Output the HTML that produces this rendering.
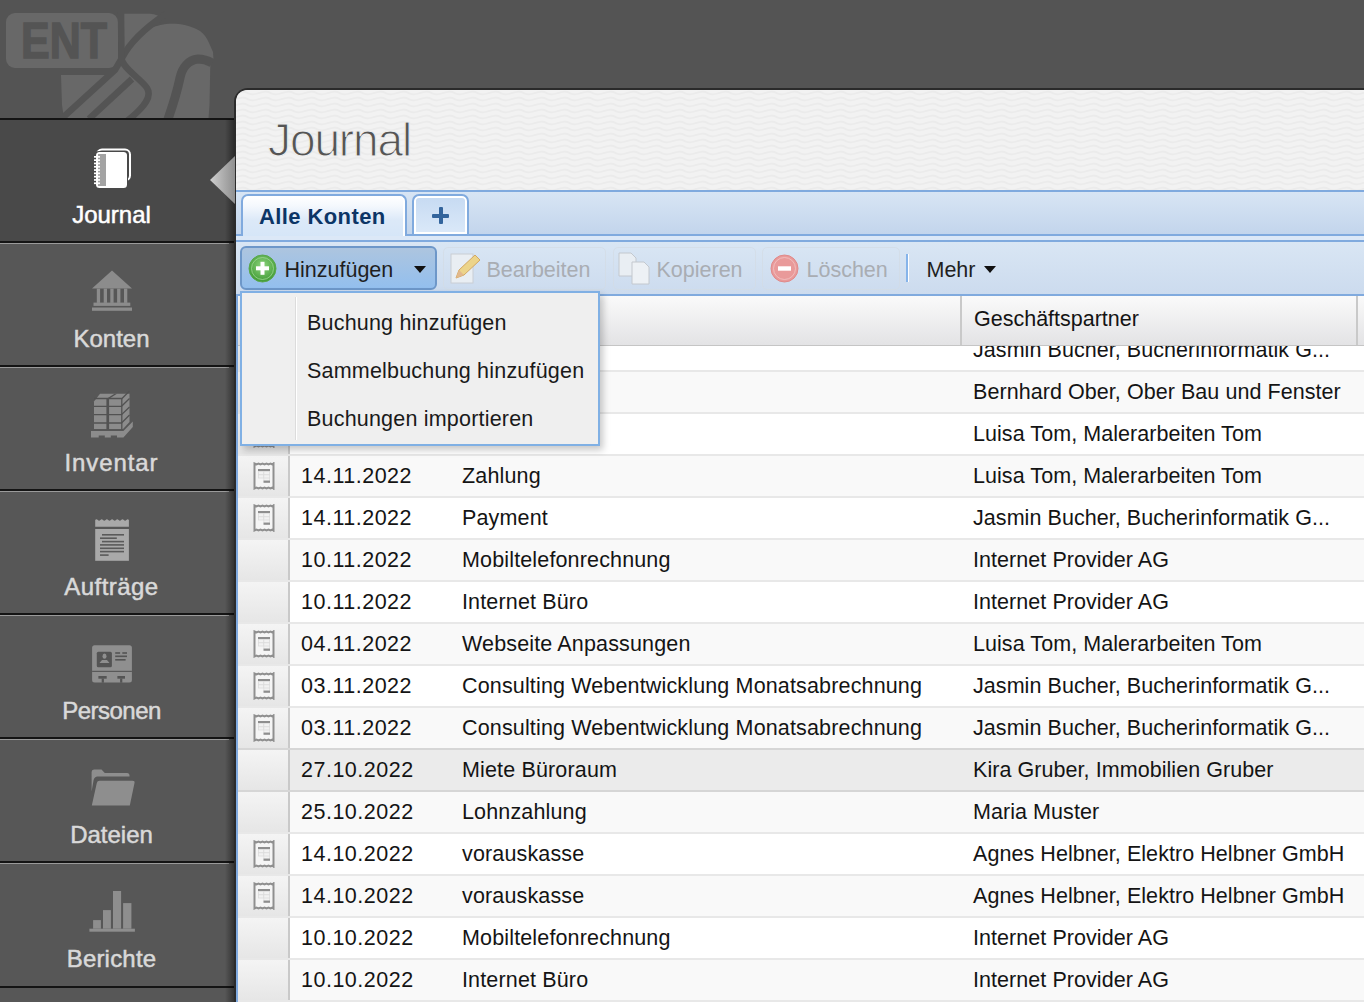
<!DOCTYPE html>
<html><head><meta charset="utf-8">
<style>
*{margin:0;padding:0;box-sizing:border-box}
html,body{width:1364px;height:1002px;overflow:hidden}
body{background:#545454;font-family:"Liberation Sans",sans-serif;position:relative}
.a{position:absolute}
.sb-line-d{position:absolute;left:0;width:234px;height:1.5px;background:#141414}
.sb-line-l{position:absolute;left:0;width:229px;height:1px;background:#9a9a9a}
.sb-lab{position:absolute;left:0;width:223px;text-align:center;font-size:24px;color:#d9d9d9;line-height:28px;margin-top:2px;-webkit-text-stroke:0.5px #d9d9d9;white-space:nowrap}
.sb-ico{position:absolute}
#panel{position:absolute;left:234px;top:88px;width:1140px;height:930px;background:#efefef;border-top-left-radius:14px;border-top:2px solid #2b2b2b;border-left:2px solid #2b2b2b}
.title{position:absolute;left:268px;top:111.5px;font-size:46px;letter-spacing:-1.1px;color:#555;-webkit-text-stroke:1.1px #efefef;line-height:56px;white-space:nowrap}
.txt{font-size:21.5px;color:#141414;white-space:nowrap}
#grid{position:absolute;left:238px;top:296px;width:1126px;height:706px;overflow:hidden;background:#fff}
.row{position:absolute;left:0;width:1126px;height:42px;border-bottom:2px solid #e8e8e8;background:#fff}
.row.g{background:#f9f9f9}
.row.h .ic{top:0;height:40px}
.row.h .c1,.row.h .c2,.row.h .c3{top:-0.5px}
.row.h{background:#ebebeb;border-bottom:2px solid #d6d6d6;border-top:2px solid #d6d6d6}
.row .ic{position:absolute;left:0;top:0;width:52px;height:40px;background:linear-gradient(#f4f4f4,#e6e6e6);border-right:2px solid #c9c9c9}
.row .rc{position:absolute;left:15px;top:6px}
.row .c1,.row .c2,.row .c3{position:absolute;top:-0.5px;line-height:41px;font-size:21.5px;color:#141414;white-space:nowrap}
.row .c1{left:63px;letter-spacing:0.5px}
.row .c2{left:224px;letter-spacing:0.15px}
.row .c3{left:735px;letter-spacing:0.06px}
.btn-t{position:absolute;font-size:21.5px;line-height:28px;white-space:nowrap;margin-top:1px;margin-left:-1.5px}
.dis{color:#a9adb3}
.mi{position:absolute;left:307px;letter-spacing:0.2px;margin-top:1px;font-size:21.5px;color:#1a1a1a;line-height:28px;white-space:nowrap}
</style></head><body>

<!-- sidebar -->
<div class="a" style="left:0;top:119px;width:234px;height:883px;background:#575757"></div>
<div class="a" style="left:0;top:119px;width:234px;height:122px;background:#494949"></div>
<div class="sb-line-d" style="top:118px"></div>
<div class="sb-line-d" style="top:241px"></div>
<div class="sb-line-l" style="top:243px"></div>
<div class="sb-line-d" style="top:365px"></div>
<div class="sb-line-l" style="top:367px"></div>
<div class="sb-line-d" style="top:489px"></div>
<div class="sb-line-l" style="top:491px"></div>
<div class="sb-line-d" style="top:613px"></div>
<div class="sb-line-l" style="top:615px"></div>
<div class="sb-line-d" style="top:737px"></div>
<div class="sb-line-l" style="top:739px"></div>
<div class="sb-line-d" style="top:861px"></div>
<div class="sb-line-l" style="top:863px"></div>
<div class="sb-line-d" style="top:986px"></div>


<!-- logo -->
<svg class="a" style="left:0;top:0" width="234" height="118" viewBox="0 0 234 118">
<g fill="#686868">
<rect x="6" y="13" width="112" height="55" rx="9"/>
<path d="M121 13.7 H150 Q158 14.5 162 18 L152 28 C160 24 180 20 200 31 C204 34 207 38 209 43 L213 52 L213.5 60 L210.5 62 C210 70 210 90 209.5 105 L208.5 118 H64 L62 105 L61 75 H112 L118 69 Z"/>
</g>
<g fill="none" stroke="#545454" stroke-width="6.5">
<path d="M166 14 C148 26 130 42 122 58 L115 70 L58 122"/>
<path d="M132 79 L89 119"/>
<path d="M121 12 L121.5 58 C122 68 140 78 147 88 C152 96 146 106 127 121"/>
</g>
<path d="M167 122 C173 105 177 92 180 78 C182 68 188 60 198 59 C203 59 207 60 212 63" fill="none" stroke="#545454" stroke-width="9"/>
<text x="21" y="58" font-family="Liberation Sans" font-weight="bold" font-size="50" fill="#545454" stroke="#545454" stroke-width="1.5" transform="translate(21 0) scale(0.86 1) translate(-21 0)">ENT</text>
</svg>

<!-- sidebar icons -->
<svg class="a" style="left:93px;top:148px" width="40" height="42" viewBox="0 0 40 42">
<rect x="4" y="1.5" width="33" height="31" rx="5" fill="none" stroke="#fff" stroke-width="2"/>
<rect x="2" y="3" width="33" height="38" rx="4" fill="#494949"/>
<rect x="3" y="4" width="31" height="36" rx="3.5" fill="#fff"/>
<rect x="5" y="6" width="8" height="32" fill="#a3a3a3"/>
<g fill="#fff"><rect x="1" y="8" width="6" height="1.7"/><rect x="1" y="11.3" width="6" height="1.7"/><rect x="1" y="14.6" width="6" height="1.7"/><rect x="1" y="17.9" width="6" height="1.7"/><rect x="1" y="21.2" width="6" height="1.7"/><rect x="1" y="24.5" width="6" height="1.7"/><rect x="1" y="27.8" width="6" height="1.7"/><rect x="1" y="31.1" width="6" height="1.7"/><rect x="1" y="34.4" width="6" height="1.7"/></g>
</svg>

<svg class="a" style="left:85px;top:265px" width="55" height="55" viewBox="0 0 55 55"><g fill="#8c8c8c">
<path d="M27 5.5 L47 23.6 H7 Z"/>
<rect x="11.8" y="23.6" width="3.3" height="14.3"/><rect x="18.7" y="23.6" width="3.3" height="14.3"/><rect x="25.3" y="23.6" width="3.3" height="14.3"/><rect x="32.1" y="23.6" width="3.3" height="14.3"/><rect x="39" y="23.6" width="3.3" height="14.3"/>
<rect x="8.5" y="37.6" width="36.8" height="3.3"/><rect x="7" y="42.5" width="40" height="3.3"/>
</g></svg>

<svg class="a" style="left:85px;top:388px" width="55" height="55" viewBox="0 0 55 55"><g fill="#8c8c8c">
<path d="M9 13.5 L15 5.8 H44.5 V34 L38 41 H9 Z"/>
<path d="M6 43 H38.4 L47.8 33.5 V39 L38.4 49.4 H32 V47.5 H25.8 V49.4 H19.8 V47.5 H13.7 V49.4 H6 Z"/>
</g>
<g fill="none" stroke="#525252" stroke-width="1.3">
<path d="M9 10.5 H37 L44.5 3"/><path d="M9 18.3 H36.5 L44.5 10.5"/><path d="M9 26.7 H36.5 L44.5 19"/><path d="M9 35 H36.5 L44.5 27"/><path d="M36.8 10.5 V41.5"/>
</g>
<g fill="#525252"><path d="M21.4 10.5 H24.1 V41.5 H21.4 Z"/><path d="M22 10.5 L29.5 5.8 H32 L24.5 10.5 Z"/></g>
</svg>

<svg class="a" style="left:85px;top:512px" width="55" height="55" viewBox="0 0 55 55"><g fill="#a9a9a9">
<path d="M10.2 8 Q11.5 6.5 12.8 8 Q14.1 9.5 15.4 8 Q16.7 6.5 18 8 Q19.3 9.5 20.6 8 Q21.9 6.5 23.2 8 Q24.5 9.5 25.8 8 Q27.1 6.5 28.4 8 Q29.7 9.5 31 8 Q32.3 6.5 33.6 8 Q34.9 9.5 36.2 8 Q37.5 6.5 38.8 8 Q40.1 9.5 41.4 8 Q42.7 6.5 43.9 8 V14.8 H10.2 Z"/>
<rect x="10.2" y="17" width="33.7" height="31.8"/>
</g><g fill="#5a5a5a">
<rect x="17" y="22" width="22" height="1.6"/><rect x="15" y="25.4" width="16.8" height="1.6"/><rect x="17" y="28.8" width="22" height="1.6"/><rect x="15" y="32.1" width="24" height="1.6"/><rect x="15" y="35.5" width="24" height="1.6"/><rect x="15" y="38.8" width="24" height="1.6"/><rect x="15" y="42.3" width="8.6" height="1.6"/>
</g></svg>

<svg class="a" style="left:85px;top:637px" width="55" height="55" viewBox="0 0 55 55">
<rect x="7.1" y="8.2" width="39.8" height="37.4" rx="2.5" fill="#8f8f8f"/>
<g fill="#545454">
<rect x="7.1" y="33.8" width="39.8" height="1.1"/>
<rect x="11.8" y="14.8" width="15.1" height="15.4" rx="1.5"/>
<rect x="30.2" y="15.2" width="4.9" height="1.6"/><rect x="37.3" y="15.2" width="4.7" height="1.6"/>
<rect x="30.2" y="18.5" width="11.8" height="1.6"/><rect x="30.2" y="22" width="10.4" height="1.6"/>
<rect x="13.4" y="39" width="8.3" height="2.7"/><rect x="32.4" y="39" width="7.6" height="2.7"/>
<rect x="16.7" y="41.5" width="2.2" height="4.2"/><rect x="35.1" y="41.5" width="2.2" height="4.2"/>
</g>
<g fill="#8f8f8f"><ellipse cx="19.5" cy="19.2" rx="2" ry="2.6"/><path d="M14.5 26 L17 23 H22 L24.5 26 Z"/></g>
</svg>

<svg class="a" style="left:85px;top:760px" width="55" height="55" viewBox="0 0 55 55"><g fill="#8e8e8e">
<path d="M6.6 31.5 V12 Q6.6 9.5 9 9.5 H16.5 L19.8 13 H42 Q44.5 13 44.5 15.5 V16.5 H12.5 Q9.5 16.5 8.6 20 Z"/>
<path d="M14.5 20.8 H47.5 Q50 20.8 49.5 23 L44.8 45.6 H6.8 L11.8 23 Q12.3 20.8 14.5 20.8 Z"/>
</g></svg>

<svg class="a" style="left:85px;top:884px" width="55" height="55" viewBox="0 0 55 55"><g fill="#8e8e8e">
<rect x="4.4" y="44.7" width="45.5" height="3"/>
<rect x="8.1" y="36.1" width="7.8" height="8.6"/><rect x="18" y="26.1" width="7.9" height="18.6"/><rect x="28" y="7" width="8.1" height="37.7"/><rect x="38.1" y="19.1" width="8.3" height="25.6"/>
</g></svg>

<div class="sb-lab" style="top:199px;color:#fff;-webkit-text-stroke:0.5px #fff">Journal</div>
<div class="sb-lab" style="top:323px">Konten</div>
<div class="sb-lab" style="top:447px;letter-spacing:0.9px">Inventar</div>
<div class="sb-lab" style="top:571px;letter-spacing:0.45px">Aufträge</div>
<div class="sb-lab" style="top:695px;letter-spacing:-0.5px">Personen</div>
<div class="sb-lab" style="top:819px">Dateien</div>
<div class="sb-lab" style="top:943px;letter-spacing:0.2px">Berichte</div>

<div class="a" style="left:225px;top:119px;width:9px;height:883px;background:linear-gradient(to right,rgba(0,0,0,0),rgba(0,0,0,.4))"></div>
<!-- panel -->
<div id="panel"></div>
<svg class="a" style="left:236px;top:90px" width="1128" height="100"><defs><pattern id="wv" width="23" height="6" patternUnits="userSpaceOnUse"><rect width="23" height="6" fill="#f2f2f2"/><path d="M-2 4.2 C 3 1.2, 8.5 1.2, 11.5 3 C 14.5 4.8, 20 4.8, 25 1.8" fill="none" stroke="#ebebeb" stroke-width="1.8"/></pattern></defs><path d="M13 0 H1128 V100 H0 V13 Q0 0 13 0 Z" fill="url(#wv)"/></svg>
<div class="title">Journal</div>

<!-- tab strip -->
<div class="a" style="left:236px;top:190px;width:1128px;height:46px;background:linear-gradient(#d8e5f4,#c3d5ec);border-top:2px solid #80aade;border-bottom:2px solid #80aade"></div>
<div class="a" style="left:236px;top:236px;width:1128px;height:4px;background:#dce8f7"></div>
<!-- active tab -->
<div class="a" style="left:241px;top:194px;width:166px;height:42px;border:2px solid #80aade;border-bottom:none;border-radius:7px 7px 0 0;background:linear-gradient(#ffffff 0%,#f4f8fd 25%,#dce9f8 60%,#d6e6f8 100%);box-shadow:inset -2px 0 0 #fff"></div>
<div class="a" style="left:259px;top:202.5px;font-size:22px;font-weight:bold;letter-spacing:0.4px;color:#0c3566;line-height:28px">Alle Konten</div>
<!-- plus tab -->
<div class="a" style="left:412px;top:194px;width:57px;height:42px;border:2px solid #80aade;border-radius:7px 7px 0 0;background:linear-gradient(#c6daf2,#dbe9f9);box-shadow:inset 0 0 0 2px #fff"></div>
<div class="a" style="left:432px;top:213.5px;width:17px;height:4px;border-radius:1px;background:#33649c"></div>
<div class="a" style="left:438.5px;top:207px;width:4px;height:17px;border-radius:1px;background:#33649c"></div>

<!-- toolbar -->
<div class="a" style="left:236px;top:240px;width:1128px;height:56px;background:linear-gradient(#d9e6f4,#ccdbee);border-top:2px solid #80aade;border-bottom:2px solid #80aade"></div>
<!-- Hinzufuegen button -->
<div class="a" style="left:240px;top:246px;width:197px;height:44px;border:2px solid #6d97c9;border-radius:6px;background:linear-gradient(#adc5df,#93bfee)"></div>
<svg class="a" style="left:248px;top:254px" width="29" height="29" viewBox="0 0 29 29"><defs><radialGradient id="gg" cx="50%" cy="40%" r="60%"><stop offset="0" stop-color="#8fd57f"/><stop offset="1" stop-color="#3f9a34"/></radialGradient></defs><circle cx="14.5" cy="14.5" r="13.5" fill="url(#gg)" stroke="#5aa84c" stroke-width="1"/><circle cx="14.5" cy="14.5" r="11" fill="none" stroke="#a8dc9c" stroke-width="1" opacity=".7"/><rect x="8" y="12.3" width="13" height="4" fill="#fff"/><rect x="12.5" y="7.8" width="4" height="13" fill="#fff"/></svg>
<div class="btn-t" style="left:286px;top:255px;color:#1f1f1f">Hinzufügen</div>
<svg class="a" style="left:414px;top:266px" width="12" height="7"><path d="M0 0 H12 L6 7 Z" fill="#111"/></svg>

<!-- Bearbeiten -->
<div class="a" style="left:443px;top:247px;width:163px;height:43px;border:1px solid #d3dbe4;border-radius:5px;opacity:.7"></div>
<svg class="a" style="left:450px;top:252px" width="32" height="33" viewBox="0 0 32 33"><rect x="1" y="2" width="22" height="29" fill="#e9eef3" stroke="#c9ced4"/><path d="M6 26 L9 18 L25 3 L30 8 L14 23 Z" fill="#ecd48a" stroke="#d3a862"/><path d="M6 26 L9 18 L14 23 Z" fill="#e2b88c"/></svg>
<div class="btn-t dis" style="left:488px;top:255px">Bearbeiten</div>

<!-- Kopieren -->
<div class="a" style="left:613px;top:247px;width:143px;height:43px;border:1px solid #d3dbe4;border-radius:5px;opacity:.7"></div>
<svg class="a" style="left:618px;top:252px" width="34" height="33" viewBox="0 0 34 33"><path d="M1 1 H13 L18 6 V24 H1 Z" fill="#e9eef3" stroke="#c3c8ce"/><path d="M14 10 H26 L31 15 V32 H14 Z" fill="#edf1f5" stroke="#c3c8ce"/></svg>
<div class="btn-t dis" style="left:658px;top:255px">Kopieren</div>

<!-- Loeschen -->
<div class="a" style="left:762px;top:247px;width:138px;height:43px;border:1px solid #d3dbe4;border-radius:5px;opacity:.7"></div>
<svg class="a" style="left:770px;top:254px" width="29" height="29" viewBox="0 0 29 29"><circle cx="14.5" cy="14.5" r="13.5" fill="#e99a9a" stroke="#e08a8a"/><circle cx="14.5" cy="14.5" r="11" fill="none" stroke="#f3c4c4" stroke-width="1" opacity=".8"/><rect x="8" y="12.3" width="13" height="4.4" fill="#fff"/></svg>
<div class="btn-t dis" style="left:808px;top:255px">Löschen</div>

<!-- separator -->
<div class="a" style="left:906px;top:254px;width:2px;height:28px;background:#86b4ea"></div>
<div class="a" style="left:908px;top:254px;width:1px;height:28px;background:#ffffff"></div>

<!-- Mehr -->
<div class="btn-t" style="left:928px;top:255px;color:#1f1f1f">Mehr</div>
<svg class="a" style="left:984px;top:266px" width="12" height="7"><path d="M0 0 H12 L6 7 Z" fill="#111"/></svg>

<!-- grid -->
<div id="grid">
<div class="a" style="left:0;top:0;width:1126px;height:50px;background:linear-gradient(#fafafa,#e3e3e5);border-bottom:1px solid #c5c5c5;z-index:2"></div>
<div class="a" style="left:722px;top:0;width:2px;height:49px;background:#c9c9c9;z-index:3"></div>
<div class="a" style="left:1118px;top:0;width:2px;height:49px;background:#c9c9c9;z-index:3"></div>
<div class="a txt" style="left:736px;top:8px;line-height:30px;z-index:3">Geschäftspartner</div>
<div style="position:absolute;left:0;top:-296px;width:1126px;height:1002px">
<div class="row" style="top:330px"><div class="ic"><svg class="rc" width="22" height="28" viewBox="0 0 22 28"><path d="M1.5 1.5 L3.5 2.5 L5.5 1.5 L7.5 2.5 L9.5 1.5 L11.5 2.5 L13.5 1.5 L15.5 2.5 L17.5 1.5 L19.5 2.5 L20.5 1.5 V26.5 L19.5 25.5 L17.5 26.5 L15.5 25.5 L13.5 26.5 L11.5 25.5 L9.5 26.5 L7.5 25.5 L5.5 26.5 L3.5 25.5 L1.5 26.5 Z" fill="#f5f5f5" stroke="#8f8f8f" stroke-width="2"/><rect x="5" y="7" width="12" height="2" fill="#8e8e8e"/><rect x="5" y="9" width="12" height="10" fill="#dcdcdc"/><g fill="#f2f2f2"><rect x="5.8" y="9.8" width="4.4" height="2.4"/><rect x="11.2" y="9.8" width="5" height="2.4"/><rect x="5.8" y="13.2" width="4.4" height="2.4"/><rect x="11.2" y="13.2" width="5" height="2.4"/><rect x="11.2" y="16.4" width="5" height="2.2"/></g><rect x="5" y="16.4" width="5.5" height="3" fill="#f5f5f5"/><rect x="10.5" y="18.6" width="6.5" height="2.2" fill="#8e8e8e"/></svg></div><div class="c1">17.11.2022</div><div class="c2">Payment</div><div class="c3">Jasmin Bucher, Bucherinformatik G...</div></div>
<div class="row g" style="top:372px"><div class="ic"><svg class="rc" width="22" height="28" viewBox="0 0 22 28"><path d="M1.5 1.5 L3.5 2.5 L5.5 1.5 L7.5 2.5 L9.5 1.5 L11.5 2.5 L13.5 1.5 L15.5 2.5 L17.5 1.5 L19.5 2.5 L20.5 1.5 V26.5 L19.5 25.5 L17.5 26.5 L15.5 25.5 L13.5 26.5 L11.5 25.5 L9.5 26.5 L7.5 25.5 L5.5 26.5 L3.5 25.5 L1.5 26.5 Z" fill="#f5f5f5" stroke="#8f8f8f" stroke-width="2"/><rect x="5" y="7" width="12" height="2" fill="#8e8e8e"/><rect x="5" y="9" width="12" height="10" fill="#dcdcdc"/><g fill="#f2f2f2"><rect x="5.8" y="9.8" width="4.4" height="2.4"/><rect x="11.2" y="9.8" width="5" height="2.4"/><rect x="5.8" y="13.2" width="4.4" height="2.4"/><rect x="11.2" y="13.2" width="5" height="2.4"/><rect x="11.2" y="16.4" width="5" height="2.2"/></g><rect x="5" y="16.4" width="5.5" height="3" fill="#f5f5f5"/><rect x="10.5" y="18.6" width="6.5" height="2.2" fill="#8e8e8e"/></svg></div><div class="c1">16.11.2022</div><div class="c2">Fenster</div><div class="c3">Bernhard Ober, Ober Bau und Fenster</div></div>
<div class="row" style="top:414px"><div class="ic"><svg class="rc" width="22" height="28" viewBox="0 0 22 28"><path d="M1.5 1.5 L3.5 2.5 L5.5 1.5 L7.5 2.5 L9.5 1.5 L11.5 2.5 L13.5 1.5 L15.5 2.5 L17.5 1.5 L19.5 2.5 L20.5 1.5 V26.5 L19.5 25.5 L17.5 26.5 L15.5 25.5 L13.5 26.5 L11.5 25.5 L9.5 26.5 L7.5 25.5 L5.5 26.5 L3.5 25.5 L1.5 26.5 Z" fill="#f5f5f5" stroke="#8f8f8f" stroke-width="2"/><rect x="5" y="7" width="12" height="2" fill="#8e8e8e"/><rect x="5" y="9" width="12" height="10" fill="#dcdcdc"/><g fill="#f2f2f2"><rect x="5.8" y="9.8" width="4.4" height="2.4"/><rect x="11.2" y="9.8" width="5" height="2.4"/><rect x="5.8" y="13.2" width="4.4" height="2.4"/><rect x="11.2" y="13.2" width="5" height="2.4"/><rect x="11.2" y="16.4" width="5" height="2.2"/></g><rect x="5" y="16.4" width="5.5" height="3" fill="#f5f5f5"/><rect x="10.5" y="18.6" width="6.5" height="2.2" fill="#8e8e8e"/></svg></div><div class="c1">15.11.2022</div><div class="c2">Zahlung</div><div class="c3">Luisa Tom, Malerarbeiten Tom</div></div>
<div class="row g" style="top:456px"><div class="ic"><svg class="rc" width="22" height="28" viewBox="0 0 22 28"><path d="M1.5 1.5 L3.5 2.5 L5.5 1.5 L7.5 2.5 L9.5 1.5 L11.5 2.5 L13.5 1.5 L15.5 2.5 L17.5 1.5 L19.5 2.5 L20.5 1.5 V26.5 L19.5 25.5 L17.5 26.5 L15.5 25.5 L13.5 26.5 L11.5 25.5 L9.5 26.5 L7.5 25.5 L5.5 26.5 L3.5 25.5 L1.5 26.5 Z" fill="#f5f5f5" stroke="#8f8f8f" stroke-width="2"/><rect x="5" y="7" width="12" height="2" fill="#8e8e8e"/><rect x="5" y="9" width="12" height="10" fill="#dcdcdc"/><g fill="#f2f2f2"><rect x="5.8" y="9.8" width="4.4" height="2.4"/><rect x="11.2" y="9.8" width="5" height="2.4"/><rect x="5.8" y="13.2" width="4.4" height="2.4"/><rect x="11.2" y="13.2" width="5" height="2.4"/><rect x="11.2" y="16.4" width="5" height="2.2"/></g><rect x="5" y="16.4" width="5.5" height="3" fill="#f5f5f5"/><rect x="10.5" y="18.6" width="6.5" height="2.2" fill="#8e8e8e"/></svg></div><div class="c1">14.11.2022</div><div class="c2">Zahlung</div><div class="c3">Luisa Tom, Malerarbeiten Tom</div></div>
<div class="row" style="top:498px"><div class="ic"><svg class="rc" width="22" height="28" viewBox="0 0 22 28"><path d="M1.5 1.5 L3.5 2.5 L5.5 1.5 L7.5 2.5 L9.5 1.5 L11.5 2.5 L13.5 1.5 L15.5 2.5 L17.5 1.5 L19.5 2.5 L20.5 1.5 V26.5 L19.5 25.5 L17.5 26.5 L15.5 25.5 L13.5 26.5 L11.5 25.5 L9.5 26.5 L7.5 25.5 L5.5 26.5 L3.5 25.5 L1.5 26.5 Z" fill="#f5f5f5" stroke="#8f8f8f" stroke-width="2"/><rect x="5" y="7" width="12" height="2" fill="#8e8e8e"/><rect x="5" y="9" width="12" height="10" fill="#dcdcdc"/><g fill="#f2f2f2"><rect x="5.8" y="9.8" width="4.4" height="2.4"/><rect x="11.2" y="9.8" width="5" height="2.4"/><rect x="5.8" y="13.2" width="4.4" height="2.4"/><rect x="11.2" y="13.2" width="5" height="2.4"/><rect x="11.2" y="16.4" width="5" height="2.2"/></g><rect x="5" y="16.4" width="5.5" height="3" fill="#f5f5f5"/><rect x="10.5" y="18.6" width="6.5" height="2.2" fill="#8e8e8e"/></svg></div><div class="c1">14.11.2022</div><div class="c2">Payment</div><div class="c3">Jasmin Bucher, Bucherinformatik G...</div></div>
<div class="row g" style="top:540px"><div class="ic"></div><div class="c1">10.11.2022</div><div class="c2">Mobiltelefonrechnung</div><div class="c3">Internet Provider AG</div></div>
<div class="row" style="top:582px"><div class="ic"></div><div class="c1">10.11.2022</div><div class="c2">Internet Büro</div><div class="c3">Internet Provider AG</div></div>
<div class="row g" style="top:624px"><div class="ic"><svg class="rc" width="22" height="28" viewBox="0 0 22 28"><path d="M1.5 1.5 L3.5 2.5 L5.5 1.5 L7.5 2.5 L9.5 1.5 L11.5 2.5 L13.5 1.5 L15.5 2.5 L17.5 1.5 L19.5 2.5 L20.5 1.5 V26.5 L19.5 25.5 L17.5 26.5 L15.5 25.5 L13.5 26.5 L11.5 25.5 L9.5 26.5 L7.5 25.5 L5.5 26.5 L3.5 25.5 L1.5 26.5 Z" fill="#f5f5f5" stroke="#8f8f8f" stroke-width="2"/><rect x="5" y="7" width="12" height="2" fill="#8e8e8e"/><rect x="5" y="9" width="12" height="10" fill="#dcdcdc"/><g fill="#f2f2f2"><rect x="5.8" y="9.8" width="4.4" height="2.4"/><rect x="11.2" y="9.8" width="5" height="2.4"/><rect x="5.8" y="13.2" width="4.4" height="2.4"/><rect x="11.2" y="13.2" width="5" height="2.4"/><rect x="11.2" y="16.4" width="5" height="2.2"/></g><rect x="5" y="16.4" width="5.5" height="3" fill="#f5f5f5"/><rect x="10.5" y="18.6" width="6.5" height="2.2" fill="#8e8e8e"/></svg></div><div class="c1">04.11.2022</div><div class="c2">Webseite Anpassungen</div><div class="c3">Luisa Tom, Malerarbeiten Tom</div></div>
<div class="row" style="top:666px"><div class="ic"><svg class="rc" width="22" height="28" viewBox="0 0 22 28"><path d="M1.5 1.5 L3.5 2.5 L5.5 1.5 L7.5 2.5 L9.5 1.5 L11.5 2.5 L13.5 1.5 L15.5 2.5 L17.5 1.5 L19.5 2.5 L20.5 1.5 V26.5 L19.5 25.5 L17.5 26.5 L15.5 25.5 L13.5 26.5 L11.5 25.5 L9.5 26.5 L7.5 25.5 L5.5 26.5 L3.5 25.5 L1.5 26.5 Z" fill="#f5f5f5" stroke="#8f8f8f" stroke-width="2"/><rect x="5" y="7" width="12" height="2" fill="#8e8e8e"/><rect x="5" y="9" width="12" height="10" fill="#dcdcdc"/><g fill="#f2f2f2"><rect x="5.8" y="9.8" width="4.4" height="2.4"/><rect x="11.2" y="9.8" width="5" height="2.4"/><rect x="5.8" y="13.2" width="4.4" height="2.4"/><rect x="11.2" y="13.2" width="5" height="2.4"/><rect x="11.2" y="16.4" width="5" height="2.2"/></g><rect x="5" y="16.4" width="5.5" height="3" fill="#f5f5f5"/><rect x="10.5" y="18.6" width="6.5" height="2.2" fill="#8e8e8e"/></svg></div><div class="c1">03.11.2022</div><div class="c2">Consulting Webentwicklung Monatsabrechnung</div><div class="c3">Jasmin Bucher, Bucherinformatik G...</div></div>
<div class="row g" style="top:708px"><div class="ic"><svg class="rc" width="22" height="28" viewBox="0 0 22 28"><path d="M1.5 1.5 L3.5 2.5 L5.5 1.5 L7.5 2.5 L9.5 1.5 L11.5 2.5 L13.5 1.5 L15.5 2.5 L17.5 1.5 L19.5 2.5 L20.5 1.5 V26.5 L19.5 25.5 L17.5 26.5 L15.5 25.5 L13.5 26.5 L11.5 25.5 L9.5 26.5 L7.5 25.5 L5.5 26.5 L3.5 25.5 L1.5 26.5 Z" fill="#f5f5f5" stroke="#8f8f8f" stroke-width="2"/><rect x="5" y="7" width="12" height="2" fill="#8e8e8e"/><rect x="5" y="9" width="12" height="10" fill="#dcdcdc"/><g fill="#f2f2f2"><rect x="5.8" y="9.8" width="4.4" height="2.4"/><rect x="11.2" y="9.8" width="5" height="2.4"/><rect x="5.8" y="13.2" width="4.4" height="2.4"/><rect x="11.2" y="13.2" width="5" height="2.4"/><rect x="11.2" y="16.4" width="5" height="2.2"/></g><rect x="5" y="16.4" width="5.5" height="3" fill="#f5f5f5"/><rect x="10.5" y="18.6" width="6.5" height="2.2" fill="#8e8e8e"/></svg></div><div class="c1">03.11.2022</div><div class="c2">Consulting Webentwicklung Monatsabrechnung</div><div class="c3">Jasmin Bucher, Bucherinformatik G...</div></div>
<div class="row h" style="top:748px;height:44px"><div class="ic"></div><div class="c1">27.10.2022</div><div class="c2">Miete Büroraum</div><div class="c3">Kira Gruber, Immobilien Gruber</div></div>
<div class="row g" style="top:792px"><div class="ic"></div><div class="c1">25.10.2022</div><div class="c2">Lohnzahlung</div><div class="c3">Maria Muster</div></div>
<div class="row" style="top:834px"><div class="ic"><svg class="rc" width="22" height="28" viewBox="0 0 22 28"><path d="M1.5 1.5 L3.5 2.5 L5.5 1.5 L7.5 2.5 L9.5 1.5 L11.5 2.5 L13.5 1.5 L15.5 2.5 L17.5 1.5 L19.5 2.5 L20.5 1.5 V26.5 L19.5 25.5 L17.5 26.5 L15.5 25.5 L13.5 26.5 L11.5 25.5 L9.5 26.5 L7.5 25.5 L5.5 26.5 L3.5 25.5 L1.5 26.5 Z" fill="#f5f5f5" stroke="#8f8f8f" stroke-width="2"/><rect x="5" y="7" width="12" height="2" fill="#8e8e8e"/><rect x="5" y="9" width="12" height="10" fill="#dcdcdc"/><g fill="#f2f2f2"><rect x="5.8" y="9.8" width="4.4" height="2.4"/><rect x="11.2" y="9.8" width="5" height="2.4"/><rect x="5.8" y="13.2" width="4.4" height="2.4"/><rect x="11.2" y="13.2" width="5" height="2.4"/><rect x="11.2" y="16.4" width="5" height="2.2"/></g><rect x="5" y="16.4" width="5.5" height="3" fill="#f5f5f5"/><rect x="10.5" y="18.6" width="6.5" height="2.2" fill="#8e8e8e"/></svg></div><div class="c1">14.10.2022</div><div class="c2">vorauskasse</div><div class="c3">Agnes Helbner, Elektro Helbner GmbH</div></div>
<div class="row g" style="top:876px"><div class="ic"><svg class="rc" width="22" height="28" viewBox="0 0 22 28"><path d="M1.5 1.5 L3.5 2.5 L5.5 1.5 L7.5 2.5 L9.5 1.5 L11.5 2.5 L13.5 1.5 L15.5 2.5 L17.5 1.5 L19.5 2.5 L20.5 1.5 V26.5 L19.5 25.5 L17.5 26.5 L15.5 25.5 L13.5 26.5 L11.5 25.5 L9.5 26.5 L7.5 25.5 L5.5 26.5 L3.5 25.5 L1.5 26.5 Z" fill="#f5f5f5" stroke="#8f8f8f" stroke-width="2"/><rect x="5" y="7" width="12" height="2" fill="#8e8e8e"/><rect x="5" y="9" width="12" height="10" fill="#dcdcdc"/><g fill="#f2f2f2"><rect x="5.8" y="9.8" width="4.4" height="2.4"/><rect x="11.2" y="9.8" width="5" height="2.4"/><rect x="5.8" y="13.2" width="4.4" height="2.4"/><rect x="11.2" y="13.2" width="5" height="2.4"/><rect x="11.2" y="16.4" width="5" height="2.2"/></g><rect x="5" y="16.4" width="5.5" height="3" fill="#f5f5f5"/><rect x="10.5" y="18.6" width="6.5" height="2.2" fill="#8e8e8e"/></svg></div><div class="c1">14.10.2022</div><div class="c2">vorauskasse</div><div class="c3">Agnes Helbner, Elektro Helbner GmbH</div></div>
<div class="row" style="top:918px"><div class="ic"></div><div class="c1">10.10.2022</div><div class="c2">Mobiltelefonrechnung</div><div class="c3">Internet Provider AG</div></div>
<div class="row g" style="top:960px"><div class="ic"></div><div class="c1">10.10.2022</div><div class="c2">Internet Büro</div><div class="c3">Internet Provider AG</div></div>

</div>
</div>
<div class="a" style="left:236px;top:296px;width:2px;height:706px;background:#7fa9df"></div>

<div style="position:absolute;left:0;top:0;z-index:20">
<div class="a" style="left:240px;top:291px;width:360px;height:155px;background:#efefef;border:2px solid #80b0e4;box-shadow:3px 4px 7px rgba(0,0,0,.22)"></div>
<div class="a" style="left:295px;top:297px;width:1px;height:143px;background:#dcdcdc"></div>
<div class="a" style="left:296px;top:297px;width:1px;height:143px;background:#ffffff"></div>
<div class="mi" style="top:308px">Buchung hinzufügen</div>
<div class="mi" style="top:356px">Sammelbuchung hinzufügen</div>
<div class="mi" style="top:404px">Buchungen importieren</div>

</div>
<!-- sidebar arrow -->
<svg class="a" style="left:209px;top:156px" width="26" height="48" viewBox="0 0 26 48"><defs><linearGradient id="ag" x1="0" x2="1"><stop offset="0" stop-color="#cfcfcf"/><stop offset="1" stop-color="#8f8f8f"/></linearGradient></defs><path d="M26 0 V48 L1 24 Z" fill="url(#ag)"/></svg>

</body></html>
